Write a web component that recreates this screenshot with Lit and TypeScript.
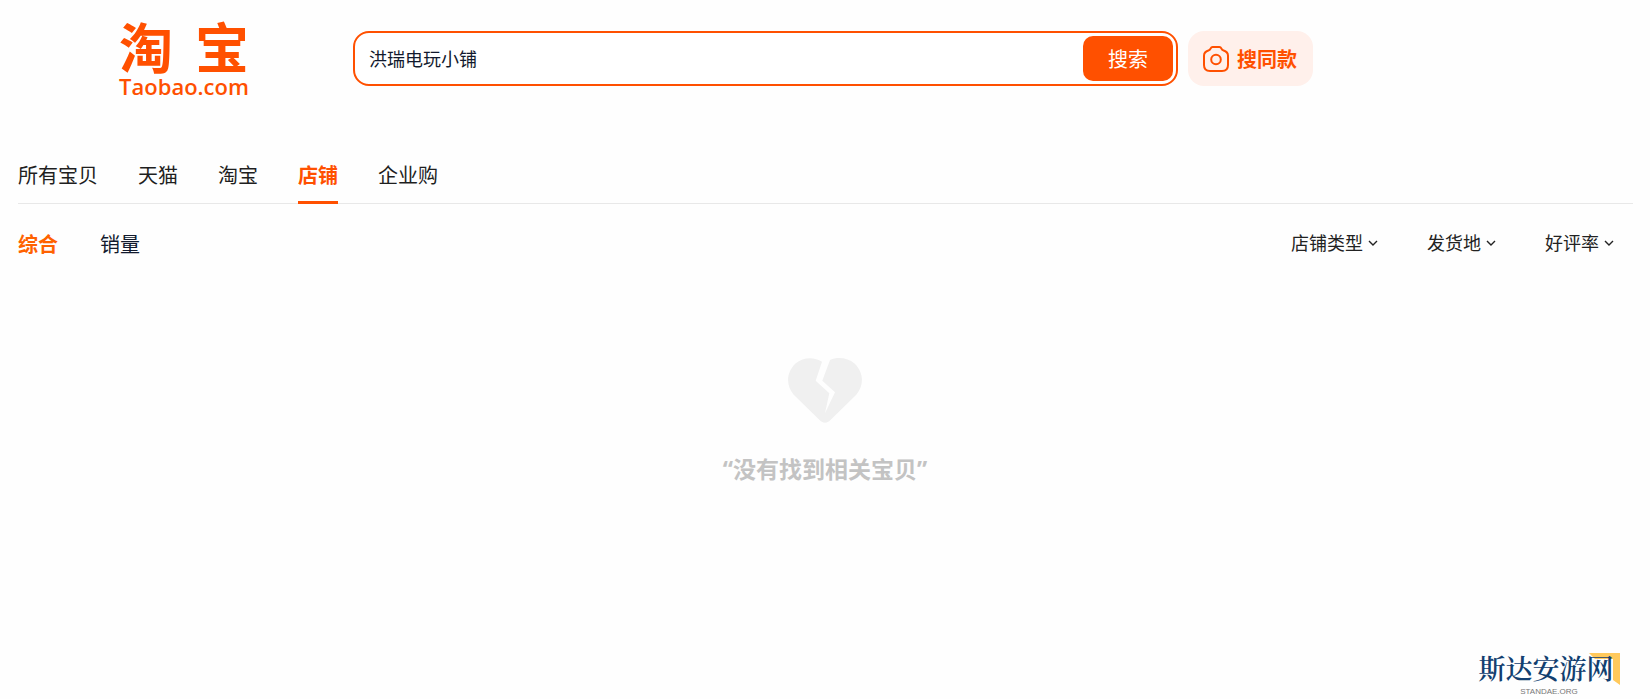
import { LitElement, html, css } from "lit";
import { customElement, property, state } from "lit/decorators.js";
import { classMap } from "lit/directives/class-map.js";

@customElement("filter-select")
class FilterSelect extends LitElement {
  @property() label = "";

  static styles = css`
    .filter {
      display: flex;
      align-items: center;
      gap: 5px;
      color: #222;
    }
    select {
      appearance: none;
      margin: 0;
      padding: 0;
      border: 0;
      background: none;
      color: inherit;
      font: inherit;
      font-size: 18px;
      line-height: 26px;
      cursor: pointer;
    }
    svg {
      width: 10px;
      height: 6px;
      pointer-events: none;
    }
  `;

  render() {
    return html`
      <label class="filter">
        <select aria-label=${this.label}>
          <option>${this.label}</option>
        </select>
        <svg viewBox="0 0 10 6" fill="none" stroke="currentColor" stroke-width="1.4">
          <path d="M1 1 5 5 9 1" />
        </svg>
      </label>
    `;
  }
}

@customElement("app-root")
class AppRoot extends LitElement {
  @state() tab = "店铺";
  @state() sort = "综合";

  private tabs = ["所有宝贝", "天猫", "淘宝", "店铺", "企业购"];
  private sorts = ["综合", "销量"];
  private filters = ["店铺类型", "发货地", "好评率"];

  static styles = css`
    :host {
      display: flex;
      flex-direction: column;
      box-sizing: border-box;
      min-height: 100vh;
      background: #fefefe;
      color: #11192d;
      font-family: "Noto Sans", "Noto Sans CJK SC", sans-serif;
    }
    * {
      box-sizing: border-box;
    }
    button,
    input {
      margin: 0;
      padding: 0;
      border: 0;
      background: none;
      color: inherit;
      font: inherit;
    }
    button {
      cursor: pointer;
    }
    a {
      color: inherit;
      text-decoration: none;
    }

    .header {
      display: flex;
      align-items: flex-start;
      padding: 20px 20px 0 119px;
    }
    .logo {
      flex: none;
      width: 130px;
      margin-right: 104px;
      color: #ff5000;
      font-weight: 700;
    }
    .logo-name {
      display: flex;
      justify-content: space-between;
      font-size: 54px;
      line-height: 56px;
    }
    .logo-domain {
      display: block;
      font-family: "Open Sans", sans-serif;
      font-size: 22px;
      font-weight: 600;
      line-height: 20px;
      text-align: center;
    }
    .search {
      display: flex;
      align-items: center;
      width: 50vw;
      height: 55px;
      margin: 11px 10px 0 0;
      padding: 3px;
      border: 2px solid #ff5000;
      border-radius: 16px;
      background: #fff;
    }
    .search input {
      flex: 1;
      min-width: 0;
      padding: 0 11px;
      font-size: 18px;
      line-height: 26px;
      outline: 0;
    }
    .submit {
      width: 90px;
      height: 45px;
      border-radius: 10px;
      background: #ff5000;
      color: #fff;
      font-size: 20px;
    }
    .camera {
      display: flex;
      flex: none;
      align-items: center;
      gap: 8px;
      height: 55px;
      margin-top: 11px;
      padding: 0 16px 0 15px;
      border-radius: 16px;
      background: #fff0eb;
      color: #ff5000;
      font-size: 20px;
      font-weight: 700;
    }
    .camera svg {
      width: 26px;
      height: 26px;
    }

    .tabs {
      display: flex;
      gap: 40px;
      margin: 65px 17px 0 18px;
      border-bottom: 1px solid #e8e8e8;
      color: #1f1f1f;
    }
    .tab {
      height: 43px;
      margin-bottom: -1px;
      border-bottom: 3px solid transparent;
      font-size: 20px;
      line-height: 30px;
    }
    .tab.active {
      border-color: #ff5000;
      color: #ff5000;
      font-weight: 700;
    }

    .toolbar {
      display: flex;
      justify-content: space-between;
      margin: 26px 36px 0 18px;
    }
    .sorts {
      display: flex;
      gap: 42px;
    }
    .sort {
      font-size: 20px;
      line-height: 30px;
    }
    .sort.active {
      color: #ff6200;
      font-weight: 700;
    }
    .filters {
      display: flex;
      gap: 49px;
    }

    .empty {
      display: flex;
      flex-direction: column;
      align-items: center;
      gap: 28px;
      padding-top: 98px;
      color: #c3c3c3;
    }
    .empty svg {
      width: 74px;
      height: 66px;
    }
    .empty p {
      margin: 0;
      font-size: 23px;
      font-weight: 700;
      line-height: 34px;
    }

    .mark {
      position: relative;
      align-self: flex-end;
      width: 136px;
      margin: auto 36px 3px 0;
      color: #123f70;
      text-align: center;
    }
    .mark svg {
      position: absolute;
      top: 0;
      right: -6px;
      width: 31px;
      height: 32px;
    }
    .mark-name {
      position: relative;
      display: block;
      padding-bottom: 4px;
      font-family: "Noto Serif CJK SC", "Noto Sans CJK SC", serif;
      font-size: 27px;
      font-weight: 600;
      line-height: 30px;
    }
    .mark-domain {
      display: block;
      padding-left: 6px;
      color: #777;
      font-family: "Liberation Sans", sans-serif;
      font-size: 8px;
      line-height: 9px;
    }
  `;

  render() {
    return html`
      <header class="header">
        <a class="logo" href="#">
          <span class="logo-name"><span>淘</span><span>宝</span></span>
          <span class="logo-domain">Taobao.com</span>
        </a>
        <form class="search" @submit=${(e: Event) => e.preventDefault()}>
          <input type="text" aria-label="搜索" value="洪瑞电玩小铺" />
          <button class="submit">搜索</button>
        </form>
        <button class="camera">
          <svg viewBox="0 0 26 26" fill="none" stroke="currentColor" stroke-width="2" stroke-linejoin="round">
            <path d="M9.6 1h6.8c1 0 1.500.500 1.900 1.400.500 1.200 1 1.700 2.300 2.100C23.600 5.400 25 7 25 9.800V19c0 4-2 6-6 6H7c-4 0-6-2-6-6V9.800C1 7 2.400 5.400 5.400 4.500 6.700 4.100 7.200 3.600 7.700 2.400 8.100 1.500 8.600 1 9.600 1Z" />
            <circle cx="13" cy="13.500" r="4.800" />
          </svg>
          搜同款
        </button>
      </header>

      <nav class="tabs">
        ${this.tabs.map(
          (t) => html`<a
            href="#"
            class=${classMap({ tab: true, active: t === this.tab })}
            @click=${() => (this.tab = t)}
            >${t}</a
          >`
        )}
      </nav>

      <div class="toolbar">
        <div class="sorts">
          ${this.sorts.map(
            (s) => html`<button
              class=${classMap({ sort: true, active: s === this.sort })}
              @click=${() => (this.sort = s)}
            >
              ${s}
            </button>`
          )}
        </div>
        <div class="filters">
          ${this.filters.map((f) => html`<filter-select label=${f}></filter-select>`)}
        </div>
      </div>

      <main class="empty">
        <svg viewBox="0 0 74 66" fill="#f0f0f0">
          <path d="M34 3.700C26-1.500 15-1 7.500 5.500-1.500 14-2.500 27 5.500 36.500L31.500 62C35 65.500 39 65.500 42.500 62L68.500 36.500C76.500 27 75.500 14 66.500 5.500 60 0 50-1.500 42 2L34.300 22.700 47 34.300 37 55.300 41.300 35.300 27.700 22.700Z" />
        </svg>
        <p>“没有找到相关宝贝”</p>
      </main>

      <a class="mark" href="#">
        <svg viewBox="0 0 31 32" fill="#ffc95c">
          <path d="M0 0H31V32L24 27V6H6Z" />
        </svg>
        <span class="mark-name">斯达安游网</span>
        <span class="mark-domain">STANDAE.ORG</span>
      </a>
    `;
  }
}
